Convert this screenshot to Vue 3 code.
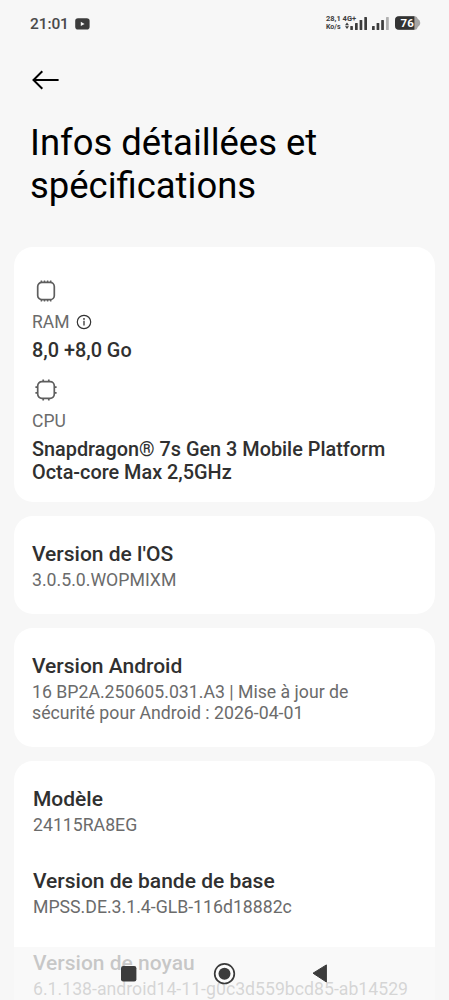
<script setup>
const os = [
  { title: "Version de l'OS", lines: ['3.0.5.0.WOPMIXM'] }
]
const android = [
  {
    title: 'Version Android',
    lines: ['16 BP2A.250605.031.A3 | Mise à jour de', 'sécurité pour Android : 2026-04-01']
  }
]
const device = [
  { title: 'Modèle', lines: ['24115RA8EG'] },
  { title: 'Version de bande de base', lines: ['MPSS.DE.3.1.4-GLB-116d18882c'] },
  { title: 'Version de noyau', lines: ['6.1.138-android14-11-g0c3d559bcd85-ab14529'] }
]
const cards = [
  { name: 'os', rows: os },
  { name: 'android', rows: android },
  { name: 'device', rows: device }
]
</script>

<template>
  <main class="screen">
    <header class="status">
      <span class="clock">21:01</span>
      <svg class="video" width="15" height="12" viewBox="0 0 15 12">
        <rect x="0.2" y="0.3" width="14.4" height="11.2" rx="2.8" fill="#3c3c3c" />
        <path d="M5.8 3.7 L9.6 5.9 L5.8 8.1 Z" fill="#f7f7f7" />
      </svg>
      <div class="net">
        <span class="rate">28,1 4G+</span>
        <span class="unit">Ko/s</span>
      </div>
      <svg class="signals" width="46" height="16" viewBox="0 0 46 16">
        <g fill="#3c3c3c">
          <path d="M0 9.3 L2 6.6 L4 9.3 Z M0 10.3 L2 13 L4 10.3 Z" />
          <rect x="5.3" y="10" width="2.6" height="4" rx=".6" />
          <rect x="10" y="7" width="2.7" height="7" rx=".6" />
          <rect x="14.6" y="4" width="2.7" height="10" rx=".6" />
          <rect x="19.3" y="1" width="2.7" height="13" rx=".6" />
          <rect x="27" y="10" width="2.7" height="4" rx=".6" />
          <rect x="31.6" y="7" width="2.7" height="7" rx=".6" />
          <rect x="36.2" y="4" width="2.7" height="10" rx=".6" />
        </g>
        <rect x="41" y="1" width="2.8" height="13" rx=".6" fill="#b0b0b0" />
      </svg>
      <svg class="battery" width="26" height="14" viewBox="0 0 26 14">
        <path d="M4 0.3 H20 Q22.2 .3 22.7 2.8 Q25.3 4.4 25.3 7 Q25.3 9.6 22.7 11.2 Q22.2 13.7 20 13.7 H4 Q0 13.7 0 9.7 V4.3 Q0 .3 4 .3 Z" fill="#a6a6a6" />
        <path d="M4 0.3 H19.4 V13.7 H4 Q0 13.7 0 9.7 V4.3 Q0 .3 4 .3 Z" fill="#333" />
        <text x="12.2" y="11" text-anchor="middle" class="level">76</text>
      </svg>
    </header>

    <svg class="back" width="28" height="20" viewBox="0 0 28 20">
      <path d="M10.3 1.2 L1.5 10 L10.3 18.8 M1.5 10 H26.6" fill="none" stroke="#000" stroke-width="2" />
    </svg>

    <h1 class="heading">Infos détaillées et<br />spécifications</h1>

    <section class="card hardware">
      <svg class="chip" width="24" height="24" viewBox="0 0 24 24" fill="none" stroke="#5e5e5e" stroke-width="1.7">
        <rect x="3.7" y="3.3" width="16.6" height="17.4" rx="4.2" />
        <path d="M7.4 3.4 V1.4 M10.5 3.2 V1.4 M13.6 3.2 V1.4 M16.7 3.4 V1.4 M7.4 20.6 V22.6 M10.5 20.8 V22.6 M13.6 20.8 V22.6 M16.7 20.6 V22.6" stroke-width="1.5" />
      </svg>
      <div class="label">
        <span>RAM</span>
        <svg width="16" height="16" viewBox="0 0 16 16">
          <circle cx="8" cy="8" r="6.7" fill="none" stroke="#333" stroke-width="1.2" />
          <circle cx="8" cy="4.9" r=".9" fill="#333" />
          <path d="M8 6.8 V11.5" stroke="#333" stroke-width="1.3" />
        </svg>
      </div>
      <div class="value">8,0 +8,0 Go</div>
      <svg class="chip cpu-chip" width="24" height="24" viewBox="0 0 24 24" fill="none" stroke="#5e5e5e" stroke-width="1.7">
        <rect x="3.7" y="3.7" width="16.6" height="16.6" rx="4.2" />
        <path d="M9.2 3.4 V1.4 M14.8 3.4 V1.4 M9.2 20.6 V22.6 M14.8 20.6 V22.6 M3.4 9.2 H1.4 M3.4 14.8 H1.4 M20.6 9.2 H22.6 M20.6 14.8 H22.6" />
      </svg>
      <div class="label"><span>CPU</span></div>
      <div class="value cpu">Snapdragon® 7s Gen 3 Mobile Platform<br />Octa-core Max 2,5GHz</div>
    </section>

    <section v-for="card in cards" :key="card.name" class="card" :class="card.name">
      <div v-for="row in card.rows" :key="row.title" class="row">
        <h2 class="title">{{ row.title }}</h2>
        <p v-for="line in row.lines" :key="line" class="sub">{{ line }}</p>
      </div>
    </section>

    <nav class="navbar">
      <svg width="449" height="53" viewBox="0 0 449 53">
        <rect x="121" y="19" width="15.4" height="15.5" rx="2.2" fill="#3c3c3c" />
        <circle cx="224.5" cy="26.7" r="9.8" fill="#fcfcfc" stroke="#3a3a3a" stroke-width="1.7" />
        <circle cx="224.5" cy="26.7" r="6" fill="#3c3c3c" />
        <path d="M313 26.2 L326.4 17.9 V35 Z" fill="#3c3c3c" stroke="#3c3c3c" stroke-width="1" stroke-linejoin="round" />
      </svg>
    </nav>
  </main>
</template>

<style>
body { margin: 0; background: #f7f7f7; }
</style>

<style scoped>
.screen {
  position: relative;
  box-sizing: border-box;
  width: 449px;
  height: 1000px;
  overflow: hidden;
  background: #f7f7f7;
  font-family: Roboto, "Liberation Sans", sans-serif;
  white-space: nowrap;
}
.status {
  display: flex;
  align-items: flex-start;
  height: 47px;
  padding-left: 30px;
}
.clock {
  width: 45px;
  margin-top: 14px;
  font-size: 15.5px;
  line-height: 20px;
  font-weight: 500;
  letter-spacing: -0.1px;
  color: #4a4a4a;
}
.video { margin-top: 18px; }
.net {
  display: flex;
  flex-direction: column;
  width: 19px;
  margin: 14px 0 0 236px;
  font-size: 7.5px;
  line-height: 9px;
  font-weight: 700;
  color: #3c3c3c;
}
.unit { font-size: 7px; }
.signals { margin-top: 16px; }
.battery { margin: 16px 0 0 4px; }
.level { font-size: 11.5px; font-weight: 700; fill: #fff; }
.back { display: block; margin: 23px 0 0 32px; }
.heading {
  margin: 31px 0 0 30px;
  font-size: 36.45px;
  line-height: 43px;
  font-weight: 400;
  color: #000;
}
.card {
  box-sizing: border-box;
  width: 421px;
  margin: 14px 0 0 14px;
  padding: 26px 18px 23px;
  border-radius: 19px;
  background: #fff;
}
.hardware {
  height: 255px;
  margin-top: 40px;
  padding-top: 32px;
}
.device { padding-left: 19px; }
.chip { display: block; margin-left: 2px; }
.label {
  display: flex;
  align-items: center;
  gap: 7px;
  height: 20px;
  margin-top: 9px;
  font-size: 17.5px;
  line-height: 20px;
  color: #6b6b6b;
}
.value {
  margin-top: 7px;
  font-size: 19.85px;
  line-height: 23px;
  font-weight: 500;
  color: #303030;
}
.cpu-chip { margin-top: 16px; }
.row { margin-bottom: 33px; }
.row:last-child { margin-bottom: 0; }
.title {
  margin: 0 0 3px;
  font-size: 21px;
  line-height: 25px;
  font-weight: 500;
  color: #303030;
}
.sub {
  margin: 0;
  font-size: 17.7px;
  line-height: 21px;
  color: #6b6b6b;
}
.navbar {
  position: absolute;
  left: 0;
  bottom: 0;
  width: 449px;
  height: 53px;
  background: rgba(247, 247, 247, 0.76);
}
</style>
